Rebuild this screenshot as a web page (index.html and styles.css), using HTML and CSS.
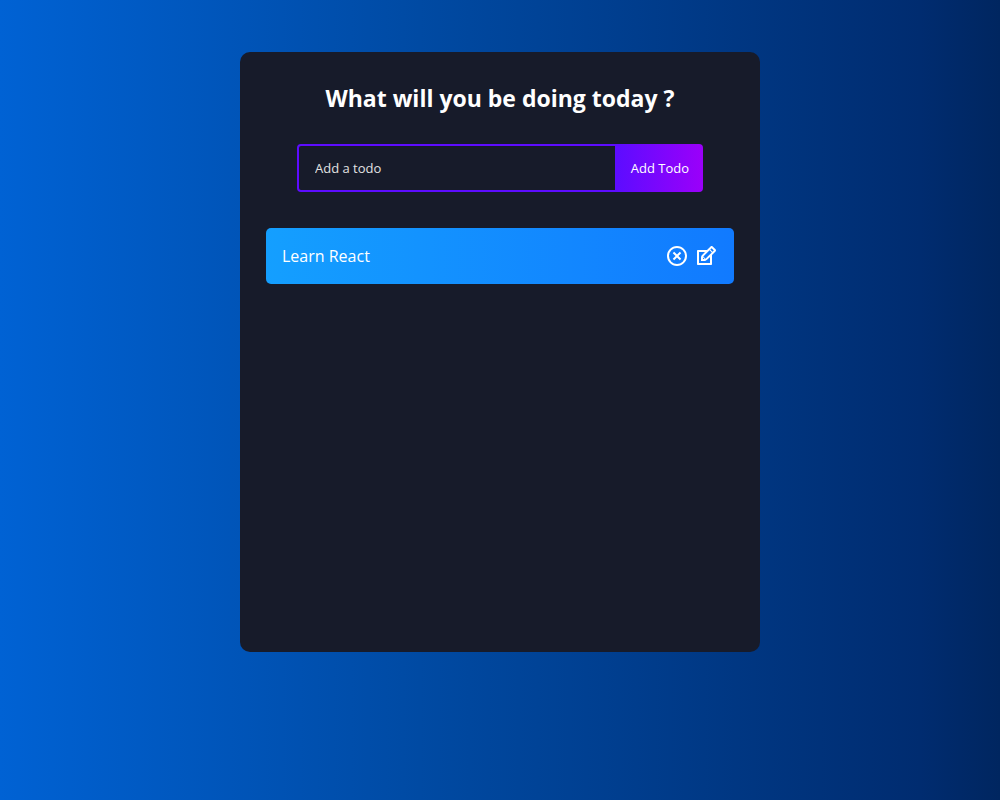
FILE: index.html
```html
<!DOCTYPE html>
<html lang="en">
<head>
<meta charset="utf-8">
<title>Todo</title>
<link rel="stylesheet" href="styles.css">
</head>
<body>
<main class="todo-app">
  <h1 class="title">What will you be doing today ?</h1>
  <form class="todo-form">
    <input class="todo-input" type="text" placeholder="Add a todo" aria-label="Add a todo">
    <button class="todo-button" type="submit">Add Todo</button>
  </form>
  <div class="todo-row">
    <span>Learn React</span>
    <div class="icons">
      <button class="icon-button" type="button" aria-label="Delete">
        <svg viewBox="0 0 24 24"><path d="M12 22C6.477 22 2 17.523 2 12S6.477 2 12 2s10 4.477 10 10-4.477 10-10 10zm0-2a8 8 0 1 0 0-16 8 8 0 0 0 0 16zm0-9.414l2.828-2.829 1.415 1.415L13.414 12l2.829 2.828-1.415 1.415L12 13.414l-2.828 2.829-1.415-1.415L10.586 12 7.757 9.172l1.415-1.415L12 10.586z"/></svg>
      </button>
      <button class="icon-button" type="button" aria-label="Edit">
        <svg viewBox="0 0 24 24"><path d="M21.561 5.318l-2.879-2.879c-.293-.293-.677-.439-1.061-.439-.385 0-.768.146-1.061.439l-3.56 3.561h-9c-.552 0-1 .447-1 1v13c0 .553.448 1 1 1h13c.552 0 1-.447 1-1v-9l3.561-3.561c.293-.293.439-.677.439-1.061s-.146-.767-.439-1.061zm-10.061 9.354l-2.172-2.172 6.293-6.293 2.172 2.172-6.293 6.293zm-2.561-1.339l1.756 1.728-1.695-.061-.061-1.667zm7.061 5.667h-11v-11h6l-3.18 3.18c-.293.293-.478.812-.629 1.289-.16.5-.191 1.056-.191 1.47v3.061h3.061c.414 0 1.108-.1 1.571-.29.464-.19.896-.347 1.188-.64l3.18-3.07v6zm2.5-11.328l-2.172-2.172 1.293-1.293 2.171 2.172-1.292 1.293z"/></svg>
      </button>
    </div>
  </div>
</main>
</body>
</html>
```
FILE: styles.css
```css
* {
  box-sizing: border-box;
  margin: 0;
  padding: 0;
  font-family: "Trebuchet MS", "Open Sans", "Noto Sans", sans-serif;
}

body {
  min-height: 100vh;
  padding: 52px 16px;
  background: linear-gradient(90deg, #0062d4 0%, #004aa3 42%, #002c70 92%, #002660 100%);
}

.todo-app {
  display: flex;
  flex-direction: column;
  align-items: center;
  max-width: 520px;
  min-height: 600px;
  margin: 0 auto;
  padding-top: 32px;
  border-radius: 10px;
  background: #171b2a;
}

.title {
  margin-bottom: 32px;
  color: #fff;
  font-size: 23px;
  font-weight: 700;
  line-height: 28px;
  text-align: center;
}

.todo-form {
  display: flex;
  justify-content: center;
  height: 48px;
  margin-bottom: 36px;
}

.todo-input {
  width: 320px;
  min-width: 0;
  padding: 0 32px 0 16px;
  border: 2px solid #5d0cff;
  border-radius: 4px 0 0 4px;
  outline: none;
  background: transparent;
  color: #fff;
  font-size: 13px;
}

.todo-input::placeholder {
  color: #e2e2e2;
}

.todo-button {
  width: 86px;
  border: none;
  border-radius: 0 4px 4px 0;
  background: linear-gradient(90deg, #5d0cff 0%, #9b00fa 100%);
  color: #fff;
  font-size: 13px;
  white-space: nowrap;
  cursor: pointer;
}

.todo-row {
  display: flex;
  align-items: center;
  justify-content: space-between;
  width: 90%;
  padding: 16px;
  border-radius: 5px;
  background: linear-gradient(90deg, #149fff 0%, #117aff 100%);
  color: #fff;
  font-size: 16px;
  line-height: 24px;
}

.icons {
  display: flex;
  gap: 5px;
}

.icon-button {
  width: 24px;
  height: 24px;
  border: none;
  background: none;
  color: #fff;
  cursor: pointer;
}

.icon-button svg {
  display: block;
  width: 24px;
  height: 24px;
  fill: currentColor;
}
```
